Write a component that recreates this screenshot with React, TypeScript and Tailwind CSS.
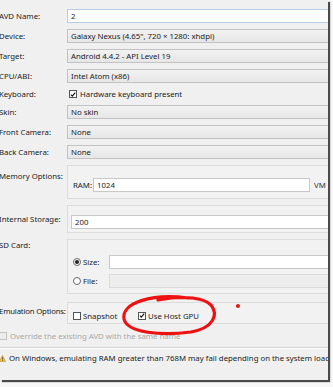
import React from 'react';

const Check = ({ checked = false, disabled = false }: { checked?: boolean; disabled?: boolean }) => (
  <span
    className={`w-[8px] h-[8px] shrink-0 border flex items-center justify-center ${
      disabled ? 'border-[#c4c4c4] bg-[#ececec]' : 'border-[#555] bg-white'
    }`}
  >
    {checked && (
      <svg viewBox="0 0 8 8" className="w-[7px] h-[7px]">
        <path d="M1.2 4.2 L3.1 6.1 L6.9 1.6" fill="none" stroke="#111" strokeWidth="1.5" />
      </svg>
    )}
  </span>
);

const Radio = ({ checked = false }: { checked?: boolean }) => (
  <span className="w-[8px] h-[8px] shrink-0 rounded-full border border-[#666] bg-white flex items-center justify-center">
    {checked && <span className="w-[4px] h-[4px] rounded-full bg-[#222]" />}
  </span>
);

const Combo = ({ value }: { value: string }) => (
  <div className="flex-1 h-[14px] border border-[#c2c2c2] bg-gradient-to-b from-[#f2f2f2] to-[#e6e6e6] flex items-center pl-[3px]">
    {value}
  </div>
);

const Row = ({ label, children, h = 'h-[14px]' }: { label: string; children: React.ReactNode; h?: string }) => (
  <div className={`flex items-center ${h}`}>
    <div className="w-[68px] shrink-0 whitespace-nowrap">{label}</div>
    {children}
  </div>
);

export default function App() {
  return (
    <div className="w-[333px] h-[387px] bg-[#f7f7f7] overflow-hidden relative font-['Noto_Sans',sans-serif]">
      <div className="w-[328px] h-[380px] bg-[#f0f0f0] shadow-[2px_2px_1px_#4a4a4a] overflow-hidden relative">
        <div className="w-[345px] -ml-[1px] pt-[9px] flex flex-col gap-[6px] text-[7.8px] leading-[10px] text-[#222]">
          <Row label="AVD Name:">
            <div className="flex-1 h-[14px] border border-[#b5cde6] bg-white flex items-center pl-[3px]">2</div>
          </Row>
          <Row label="Device:">
            <Combo value={'Galaxy Nexus (4.65", 720 × 1280: xhdpi)'} />
          </Row>
          <Row label="Target:">
            <Combo value="Android 4.4.2 - API Level 19" />
          </Row>
          <Row label="CPU/ABI:">
            <Combo value="Intel Atom (x86)" />
          </Row>
          <Row label="Keyboard:" h="h-[10px]">
            <div className="flex items-center gap-[3px] pl-[2px]">
              <Check checked />
              <span>Hardware keyboard present</span>
            </div>
          </Row>
          <Row label="Skin:">
            <Combo value="No skin" />
          </Row>
          <Row label="Front Camera:">
            <Combo value="None" />
          </Row>
          <Row label="Back Camera:">
            <Combo value="None" />
          </Row>

          {/* memory */}
          <div className="flex">
            <div className="w-[68px] shrink-0 pt-[6px] whitespace-nowrap">Memory Options:</div>
            <div className="flex-1 border border-[#dcdcdc] bg-[#f2f2f2] pt-[12px] pb-[6px] pl-[5px] flex items-center">
              <span className="w-[20px]">RAM:</span>
              <div className="w-[217px] h-[14px] border border-[#c8c8c8] bg-white flex items-center pl-[3px]">1024</div>
              <span className="ml-[4px] text-[#333]">VM</span>
            </div>
          </div>

          {/* internal storage */}
          <div className="flex">
            <div className="w-[68px] shrink-0 pt-[9px] whitespace-nowrap">Internal Storage:</div>
            <div className="flex-1 border border-[#dcdcdc] bg-[#f2f2f2] pt-[9px] pb-[3px] pl-[3px]">
              <div className="h-[14px] border border-[#c8c8c8] bg-white flex items-center pl-[3px]">200</div>
            </div>
          </div>

          {/* sd card */}
          <div className="flex">
            <div className="w-[68px] shrink-0 pt-[1px] whitespace-nowrap">SD Card:</div>
            <div className="flex-1 border border-[#dcdcdc] bg-[#f2f2f2] pt-[15px] pb-[5px] pl-[5px] flex flex-col gap-[5px]">
              <div className="flex items-center h-[14px]">
                <Radio checked />
                <span className="ml-[2px] w-[26px]">Size:</span>
                <div className="flex-1 h-[14px] border border-[#c8c8c8] bg-white" />
              </div>
              <div className="flex items-center h-[14px]">
                <Radio />
                <span className="ml-[2px] w-[26px]">File:</span>
                <div className="flex-1 h-[14px] border border-[#dadada] bg-[#ededed]" />
              </div>
            </div>
          </div>

          {/* emulation */}
          <div className="flex mt-[2px]">
            <div className="w-[68px] shrink-0 pt-[4px] whitespace-nowrap tracking-[-0.2px]">Emulation Options:</div>
            <div className="flex-1 border border-[#dcdcdc] bg-[#f2f2f2] h-[22px] pl-[5px] pt-[5px] flex items-center gap-[2px]">
              <Check />
              <span className="w-[53px]">Snapshot</span>
              <Check checked />
              <span>Use Host GPU</span>
            </div>
          </div>

          <div className="flex items-center gap-[3px] h-[10px] text-[#a8a8a8] mt-[1px]">
            <Check disabled />
            <span>Override the existing AVD with the same name</span>
          </div>

          <div className="border-t border-[#d4d4d4] border-b-white border-b" />

          <div className="flex items-center gap-[3px] h-[10px] -mt-[2px] whitespace-nowrap">
            <svg viewBox="0 0 8 8" className="w-[7px] h-[7px] shrink-0">
              <path d="M4 0.5 L7.6 7.4 L0.4 7.4 Z" fill="#f2c12e" stroke="#b7862a" strokeWidth="0.6" />
              <rect x="3.6" y="2.6" width="0.8" height="2.6" fill="#333" />
              <rect x="3.6" y="5.8" width="0.8" height="0.8" fill="#333" />
            </svg>
            <span>On Windows, emulating RAM greater than 768M may fail depending on the system load. Try</span>
          </div>
        </div>

        <svg className="absolute inset-0 pointer-events-none" width="328" height="380" viewBox="0 0 328 380">
          <path
            d="M188 298 C152 293 121 303 124 319 C127 333 162 336 191 332 C213 328 219 315 211 305 C204 298 186 295 158 300"
            fill="none"
            stroke="#ee1111"
            strokeWidth="3.2"
            strokeLinecap="round"
          />
          <circle cx="238" cy="306" r="2" fill="#e81212" />
        </svg>
      </div>
    </div>
  );
}
